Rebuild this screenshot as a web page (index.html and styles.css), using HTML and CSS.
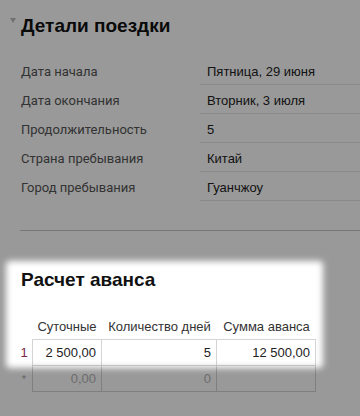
FILE: index.html
```html
<!DOCTYPE html>
<html lang="ru">
<head>
<meta charset="utf-8">
<link rel="stylesheet" href="styles.css">
</head>
<body>
<div class="page">
  <section class="trip">
    <h2 class="section-title"><span class="caret"></span>Детали поездки</h2>
    <div class="fields">
      <div class="field"><div class="label">Дата начала</div><div class="value">Пятница, 29 июня</div></div>
      <div class="field"><div class="label">Дата окончания</div><div class="value">Вторник, 3 июля</div></div>
      <div class="field"><div class="label">Продолжительность</div><div class="value">5</div></div>
      <div class="field"><div class="label">Страна пребывания</div><div class="value">Китай</div></div>
      <div class="field"><div class="label">Город пребывания</div><div class="value">Гуанчжоу</div></div>
    </div>
    <div class="divider"></div>
  </section>
  <section class="advance">
    <h2 class="advance-title">Расчет аванса</h2>
    <div class="grid">
      <div class="gh"></div>
      <div class="gh">Суточные</div>
      <div class="gh">Количество дней</div>
      <div class="gh">Сумма аванса</div>

      <div class="num">1</div>
      <div class="cell first top">2 500,00</div>
      <div class="cell top">5</div>
      <div class="cell top">12 500,00</div>

      <div class="num new">*</div>
      <div class="cell first muted">0,00</div>
      <div class="cell muted">0</div>
      <div class="cell muted"></div>
    </div>
  </section>
  <div class="spotlight"></div>
</div>
</body>
</html>
```
FILE: styles.css
```css
* { box-sizing: border-box; }
html, body { margin: 0; padding: 0; background: #fff; }
.page {
  position: relative;
  width: 360px;
  height: 416px;
  overflow: hidden;
  padding-left: 21px;
  font-family: "Liberation Sans", Arial, sans-serif;
  color: #222;
}
.section-title {
  display: flex;
  margin: 15px 0 0 -11px;
  font-size: 19px;
  line-height: 22px;
  font-weight: bold;
  color: #111;
}
.caret {
  align-self: flex-start;
  margin-top: 3px;
  margin-right: 5px;
  width: 0;
  height: 0;
  border-left: 3px solid transparent;
  border-right: 3px solid transparent;
  border-top: 5px solid #bdbdbd;
}
.fields { margin-top: 19px; }
.field {
  display: grid;
  grid-template-columns: 179px 1fr;
  align-items: end;
}
.label {
  font-family: Roboto, "Liberation Sans", sans-serif;
  font-size: 13px;
  line-height: 16px;
  color: #555;
  padding-bottom: 5px;
}
.value {
  font-size: 13px;
  line-height: 16px;
  color: #222;
  padding: 8px 0 4px 7px;
  border-bottom: 1px solid #e6e6e6;
}
.divider {
  margin: 29px 0 0 -1px;
  height: 1px;
  background: #c8c8c8;
}
.advance-title {
  margin: 38px 0 0 0;
  font-size: 19px;
  line-height: 22px;
  font-weight: bold;
  color: #111;
}
.grid {
  display: grid;
  grid-template-columns: 16px 70px 115px 99px;
  grid-template-rows: 26px 27px 26px;
  margin: 22px 0 0 -5px;
  font-size: 13px;
}
.gh {
  display: flex;
  align-items: center;
  justify-content: center;
  color: #333;
  white-space: nowrap;
}
.num {
  display: flex;
  align-items: center;
  justify-content: center;
  color: #7d2448;
}
.num.new { color: #aaa; font-size: 11px; }
.cell {
  display: flex;
  align-items: center;
  justify-content: flex-end;
  padding-right: 5px;
  border-right: 1px solid #d4d4d4;
  border-bottom: 1px solid #d4d4d4;
  color: #222;
}
.cell.first { border-left: 1px solid #d4d4d4; }
.cell.top { border-top: 1px solid #d4d4d4; }
.cell.muted { color: #b5b5b5; }
.spotlight {
  position: absolute;
  left: 6px;
  top: 261px;
  width: 317px;
  height: 107px;
  border-radius: 4px;
  box-shadow: 0 0 0 1200px rgba(0, 0, 0, 0.4);
  filter: blur(3px);
  pointer-events: none;
}
```
